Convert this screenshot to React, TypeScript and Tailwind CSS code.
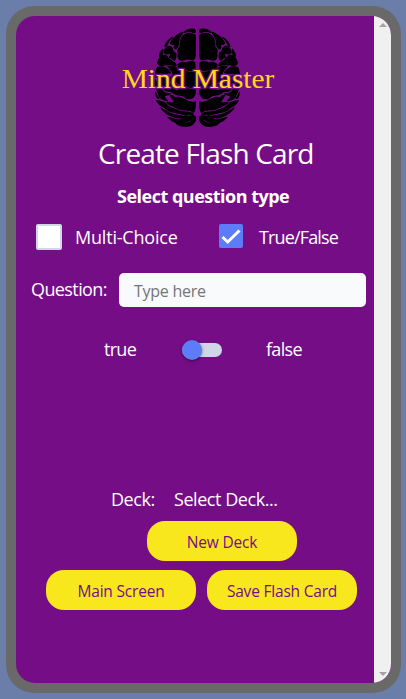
import React from "react";

function BrainHalf() {
  return (
    <g fill="#000" stroke="#000" strokeWidth="3.5" strokeLinejoin="round">
      <path d="M222 37Q231 27 247 27Q258 28 256 36Q250 40 246 35Q234 33 222 37Z" />
      <path d="M220 47Q236 36 247 43Q256 40 256 50V98Q257 119 246 120Q238 116 229 117Q207 127 204 110Q207 99 203 92Q207 83 211 80Q208 62 220 47Z" />
      <path d="M208 42Q217 34 219 38Q206 53 205 68Q207 79 197 87Q190 86 195 72Q186 75 181 70Q190 51 208 42Z" />
      <path d="M187 52Q174 59 166 75Q163 82 169 79Q174 64 187 52Z" />
      <path d="M175 79Q188 78 188 91Q193 99 197 100Q200 113 193 121Q184 111 178 112Q185 100 179 100Q169 104 162 98Q161 88 175 79Z" />
      <path d="M158 88Q148 99 149 109Q153 108 158 100Z" />
      <path d="M150 113Q159 101 170 108Q177 117 190 126Q199 130 198 138Q180 132 166 135Q144 139 143 128Q146 119 150 113Z" />
      <path d="M204 133Q216 123 228 129Q246 121 255 129V148Q242 157 231 148Q214 151 205 143Z" />
      <path d="M174 140Q192 136 205 148Q217 157 227 153Q245 163 256 155V197Q244 207 230 198Q219 191 211 194Q200 182 184 185Q169 183 161 169Q178 176 190 168Q190 155 174 140Z" />
      <path d="M142 143Q156 138 166 144Q178 149 181 158Q166 162 151 159Q141 165 138 173Q134 158 142 143Z" />
      <path d="M146 166Q155 162 160 173Q166 187 182 190Q193 191 202 194Q195 204 182 200Q164 202 153 191Q140 188 146 166Z" />
      <path d="M136 179Q142 193 155 200Q147 207 139 200Q133 194 136 179Z" />
      <path d="M161 205Q183 200 195 210Q204 216 211 204Q222 197 231 205Q244 212 253 204Q259 214 253 226Q247 240 230 235Q217 223 203 225Q191 221 182 213Q169 217 161 205Z" />
      <path d="M140 207Q153 202 160 215Q170 223 181 221Q173 228 161 224Q163 235 173 243Q154 239 149 230Q144 218 140 207Z" />
      <path d="M181 226Q190 224 193 234Q206 229 215 235Q229 241 237 245Q251 250 256 245Q257 268 250 277Q242 269 225 270Q207 269 192 260Q177 255 171 247Q191 251 194 246Q186 237 181 226Z" />
      <path d="M137 218Q143 231 147 235Q140 238 137 218Z" />
      <path d="M140 242Q155 244 167 250Q177 264 192 267Q211 276 226 276Q243 275 250 283Q239 282 230 286Q214 281 198 278Q173 275 164 262Q148 257 140 242Z" />
      <path d="M153 264Q165 271 173 277Q189 285 203 286Q220 290 230 290Q209 298 189 290Q167 284 153 264Z" />
      <path d="M174 292Q193 298 208 300Q228 292 245 287Q255 286 257 294Q257 307 246 314Q236 321 218 318Q203 317 198 308Q184 303 174 292ZM207 309Q225 315 246 303Q249 298 241 300Q227 308 207 309Z" fillRule="evenodd" />
    </g>
  );
}

function Logo() {
  const text = { x: 35, y: 205, textLength: 458, fontSize: 81, lengthAdjust: "spacingAndGlyphs" };
  return (
    <svg className="-ml-[9px] h-[115px] w-[180px] font-['Liberation_Serif',serif]" viewBox="0 0 540 345" role="img" aria-label="Mind Master">
      <BrainHalf />
      <g transform="translate(525 0) scale(-1 1)">
        <BrainHalf />
      </g>
      <text {...text} className="fill-[#ffd719] stroke-[#750d87] [paint-order:stroke]" strokeWidth="7">
        Mind Master
      </text>
    </svg>
  );
}

const button = "flex h-10 w-[150px] items-center justify-center rounded-[18px] bg-[#f9e71d] pt-[3px] text-[15.5px] tracking-[-0.2px] text-[#750d87]";

export default function App() {
  return (
    <main className="h-[699px] w-[406px] bg-[#6b7eaa] pt-1.5 pl-1.5 font-['Open_Sans','Noto_Sans',sans-serif] text-white">
      <div className="h-[687px] w-[395px] rounded-[28px] bg-[#696969] p-2.5">
        <div className="flex h-[667px] overflow-hidden rounded-[19px] bg-[#750d87]">
          <div className="w-[358px] shrink-0 whitespace-nowrap">
            <header className="flex h-[118px] pt-1 pl-[103px]">
              <Logo />
            </header>
            <h1 className="h-[40px] pl-[82px] text-[28px] leading-[38px] tracking-[-0.85px]">Create Flash Card</h1>
            <h2 className="mt-[9px] h-[25px] pl-[101px] text-[18px] leading-[26px] font-bold tracking-[-0.5px]">Select question type</h2>
            <div className="mt-4 flex h-[26px] items-center pl-5">
              <span className="size-[26px] rounded-xs border-2 border-[#d0d8e8] bg-white" />
              <span className="ml-[13px] w-[144px] text-[18px] leading-6 tracking-[-0.2px]">Multi-Choice</span>
              <span className="mb-0.5 flex size-6 items-center justify-center rounded-xs bg-[#5c7cfa]">
                <svg className="size-6" viewBox="0 0 24 24" fill="none" stroke="white" strokeWidth="3">
                  <path d="m3.5 13 5.2 5L20.5 6.5" />
                </svg>
              </span>
              <span className="ml-4 text-[18px] leading-6 tracking-[-0.85px]">True/False</span>
            </div>
            <div className="mt-[23px] flex h-[34px] pl-[15px]">
              <label className="w-[88px] text-[18px] leading-8 tracking-[-0.6px]">Question:</label>
              <div className="h-[34px] w-[247px] rounded-[5px] bg-[#f8fafc] pl-[15px] text-[16px] leading-[37px] tracking-[-0.25px] text-[#757575]">Type here</div>
            </div>
            <div className="mt-[29px] flex h-[25px] items-center pl-[88px]">
              <span className="w-[78px] text-[18px] leading-6 tracking-[-0.7px]">true</span>
              <span className="mt-[3px] flex h-[14px] w-10 items-center rounded-full bg-[#ced6e7]">
                <span className="size-5 shrink-0 rounded-full bg-[#5c7cfa] shadow-[0_1px_3px_#0008]" />
              </span>
              <span className="ml-11 text-[18px] leading-6 tracking-[-0.7px]">false</span>
            </div>
            <div className="mt-[124px] flex h-[30px] pl-[95px] text-[18px] leading-7 tracking-[-0.45px]">
              <span className="w-[63px]">Deck:</span>
              <span>Select Deck...</span>
            </div>
            <div className="mt-1.5 pl-[131px]">
              <div className={button}>New Deck</div>
            </div>
            <div className="mt-[9px] flex gap-[11px] pl-[30px]">
              <div className={button}>Main Screen</div>
              <div className={button}>Save Flash Card</div>
            </div>
          </div>
          <div className="flex w-[17px] shrink-0 flex-col items-center justify-between bg-[#f0f0f0] py-[7px]">
            <span className="h-0 w-0 border-x-4 border-b-4 border-x-transparent border-b-[#a3a3a3]" />
            <span className="h-0 w-0 border-x-4 border-t-4 border-x-transparent border-t-[#a3a3a3]" />
          </div>
        </div>
      </div>
    </main>
  );
}
